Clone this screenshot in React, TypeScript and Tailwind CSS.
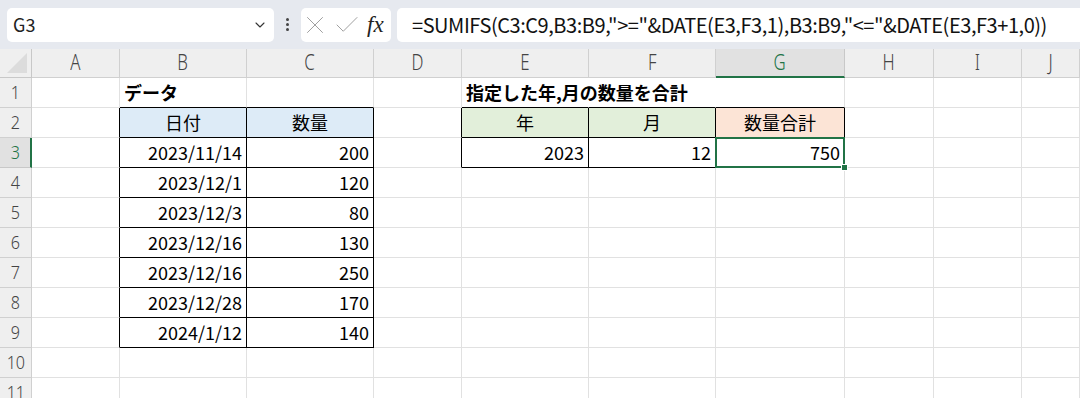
import { Check, ChevronDown, X } from "lucide-react";

const FONT = { fontFamily: '"Noto Sans CJK JP", "Noto Sans", sans-serif' };
const HEAD_FONT = { fontFamily: '"Noto Sans", "Noto Sans CJK JP", sans-serif' };

const COLS = ["A", "B", "C", "D", "E", "F", "G", "H", "I", "J"];
const ROWS = [1, 2, 3, 4, 5, 6, 7, 8, 9, 10, 11];

type Cell = { v: string; align?: "l" | "c" | "r"; bold?: boolean; fill?: string };

// row -> col index (1 = A) -> cell
const data: Record<number, Record<number, Cell>> = {
  1: {
    2: { v: "データ", bold: true },
    5: { v: "指定した年,月の数量を合計", bold: true },
  },
  2: {
    2: { v: "日付", align: "c", fill: "bg-[#ddebf7]" },
    3: { v: "数量", align: "c", fill: "bg-[#ddebf7]" },
    5: { v: "年", align: "c", fill: "bg-[#e2efda]" },
    6: { v: "月", align: "c", fill: "bg-[#e2efda]" },
    7: { v: "数量合計", align: "c", fill: "bg-[#fce4d6]" },
  },
  3: {
    2: { v: "2023/11/14", align: "r" },
    3: { v: "200", align: "r" },
    5: { v: "2023", align: "r" },
    6: { v: "12", align: "r" },
    7: { v: "750", align: "r" },
  },
  4: { 2: { v: "2023/12/1", align: "r" }, 3: { v: "120", align: "r" } },
  5: { 2: { v: "2023/12/3", align: "r" }, 3: { v: "80", align: "r" } },
  6: { 2: { v: "2023/12/16", align: "r" }, 3: { v: "130", align: "r" } },
  7: { 2: { v: "2023/12/16", align: "r" }, 3: { v: "250", align: "r" } },
  8: { 2: { v: "2023/12/28", align: "r" }, 3: { v: "170", align: "r" } },
  9: { 2: { v: "2024/1/12", align: "r" }, 3: { v: "140", align: "r" } },
};

// bordered tables: B2:C9 and E2:G3
function inTable(r: number, c: number) {
  if (c >= 2 && c <= 3 && r >= 2 && r <= 9) return true;
  if (c >= 5 && c <= 7 && r >= 2 && r <= 3) return true;
  return false;
}

function GridCell({ r, c }: { r: number; c: number }) {
  const cell = data[r]?.[c];
  const rightBlack = inTable(r, c) || inTable(r, c + 1);
  const bottomBlack = inTable(r, c) || inTable(r + 1, c);
  // title in E1 spills over F1, gridlines hidden under it
  const hideRight = r === 1 && (c === 5 || c === 6);
  const selected = r === 3 && c === 7;
  const align =
    cell?.align === "r" ? "justify-end pr-[4px]" : cell?.align === "c" ? "justify-center" : "justify-start pl-[4px]";

  return (
    <div
      className={`relative flex items-center whitespace-nowrap text-[18px] text-black ${align} ${
        cell?.fill ?? "bg-transparent"
      } ${
        hideRight
          ? "border-r border-r-transparent"
          : rightBlack
            ? "border-r border-r-black"
            : "border-r border-r-[#e1e1e1]"
      } ${bottomBlack ? "border-b border-b-black" : "border-b border-b-[#e1e1e1]"} ${
        cell?.bold ? "z-10 font-bold" : ""
      } ${cell?.align === "c" ? "text-[#333]" : ""}`}
    >
      {cell?.v}
      {selected && (
        <>
          <div className="pointer-events-none absolute -left-[1px] -top-[1px] bottom-[-1px] right-[-1px] border-2 border-[#217346]" />
          <div className="absolute -bottom-[4px] -right-[4px] z-10 h-[7px] w-[7px] border border-white bg-[#217346]" />
        </>
      )}
    </div>
  );
}

function FormulaBar() {
  return (
    <div className="flex h-[49px] items-center bg-[#e6e9ef] pl-[7px]">
      <div className="flex h-[34px] w-[267px] items-center justify-between rounded-[5px] bg-white pl-[6px] pr-[6px] text-[18px] text-[#222]">
        <span>G3</span>
        <ChevronDown size={16} strokeWidth={1.6} className="text-[#333]" />
      </div>
      <div className="flex w-[27px] flex-col items-center justify-center gap-[2px]">
        <span className="h-[3px] w-[3px] rounded-full bg-[#444]" />
        <span className="h-[3px] w-[3px] rounded-full bg-[#444]" />
        <span className="h-[3px] w-[3px] rounded-full bg-[#444]" />
      </div>
      <div className="flex h-[34px] w-[90px] items-center rounded-[5px] bg-white">
        <X size={30} strokeWidth={0.8} className="-ml-[1px] text-[#a0a0a0]" />
        <Check size={30} strokeWidth={0.8} className="ml-[2px] text-[#a0a0a0]" />
        <span
          className="ml-[5px] text-[23px] italic leading-none text-[#222]"
          style={{ fontFamily: '"Liberation Serif", serif' }}
        >
          fx
        </span>
      </div>
      <div className="ml-[6px] flex h-[34px] flex-1 items-center rounded-l-[5px] bg-white pl-[15px] text-[20px] text-[#111]">
        <span className="tracking-[-0.45px]">=SUMIFS(C3:C9,B3:B9,"&gt;="&amp;DATE(E3,F3,1),B3:B9,"&lt;="&amp;DATE(E3,F3+1,0))</span>
      </div>
    </div>
  );
}

export default function App() {
  return (
    <div className="h-[398px] w-[1080px] overflow-hidden bg-white" style={FONT}>
      <FormulaBar />
      <div className="grid grid-cols-[32px_88px_127px_127px_88px_127px_127px_129px_89px_88px_1fr] grid-rows-[29px_repeat(11,30px)]">
        {/* corner */}
        <div className="relative border-b border-r border-[#c8c8c8] bg-[#efefef]">
          <div className="absolute bottom-[4px] right-[4px] h-0 w-0 border-b-[20px] border-l-[20px] border-b-[#dcdcdc] border-l-transparent" />
        </div>
        {COLS.map((c) => (
          <div
            key={c}
            style={HEAD_FONT}
            className={`flex items-center justify-center text-[21px] font-light ${
              c === "G"
                ? "border-b-2 border-r border-b-[#217346] border-r-[#c8c8c8] bg-[#e1e1e1] text-[#217346]"
                : "border-b border-r border-[#d0d0d0] bg-[#efefef] text-[#444]"
            }`}
          >
            <span className="inline-block scale-x-[0.8]">{c}</span>
          </div>
        ))}
        {ROWS.map((r) => [
          <div
            key={`h${r}`}
            style={HEAD_FONT}
            className={`flex items-center justify-center text-[19px] font-light ${
              r === 3
                ? "border-b border-r-2 border-b-[#c8c8c8] border-r-[#217346] bg-[#e1e1e1] text-[#217346]"
                : "border-b border-r border-[#d0d0d0] bg-[#efefef] text-[#444]"
            }`}
          >
            <span className="inline-block scale-x-[0.85]">{r}</span>
          </div>,
          ...COLS.map((_, i) => <GridCell key={`${r}-${i}`} r={r} c={i + 1} />),
        ])}
      </div>
    </div>
  );
}
